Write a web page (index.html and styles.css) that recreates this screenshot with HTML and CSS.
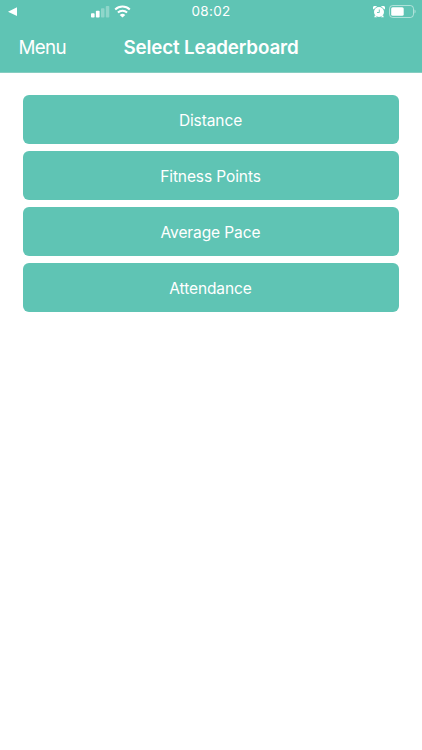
FILE: index.html
```html
<!DOCTYPE html>
<html lang="en">
<head>
<meta charset="utf-8">
<title>Select Leaderboard</title>
<link rel="stylesheet" href="styles.css">
</head>
<body>
<header class="header">
  <div class="status">
    <div class="status-left">
      <svg class="back" width="10" height="10" viewBox="0 0 10 10"><path d="M0 4.700 9 .3v8.800z"/></svg>
      <svg class="signal" width="19" height="12" viewBox="0 0 19 12"><rect x="0" y="7.300" width="3.600" height="4.200" rx=".8"/><rect x="4.900" y="4.800" width="3.700" height="6.700" rx=".8"/><rect class="dim" x="10" y="2.300" width="3.500" height="9.200" rx=".8"/><rect class="dim" x="14.800" y="0" width="3.500" height="11.500" rx=".8"/></svg>
      <svg class="wifi" width="17" height="13" viewBox="0 0 17 13"><path class="wave" d="M1.200 4.500a10.500 10.500 0 0 1 14.600 0M3.900 7.500a6.700 6.700 0 0 1 9.200 0"/><path d="M5.700 9.900a4.200 4.200 0 0 1 5.600 0l-2.800 2.700z"/></svg>
    </div>
    <time class="clock">08:02</time>
    <div class="status-right">
      <svg class="alarm" width="12" height="12" viewBox="0 0 12 12"><circle cx="6" cy="6" r="5"/><path d="M.5 3.500A2.300 2.300 0 0 1 4 .3zM11.500 3.500A2.300 2.300 0 0 0 8 .3zM2 9l-.8 2.200h3zM10 9l.8 2.200h-3z"/><path class="hands" d="M6.300 3.500v3H4"/></svg>
      <svg class="battery" width="27" height="13" viewBox="0 0 27 13"><rect class="shell" x=".5" y=".5" width="24" height="12" rx="3.200"/><rect x="2.200" y="2.200" width="12.500" height="8.600" rx="1.500"/><path class="tip" d="M25.500 4.500c1.500.5 1.500 3.400 0 4z"/></svg>
    </div>
  </div>
  <nav class="nav"><a class="menu">Menu</a><h1 class="title">Select Leaderboard</h1></nav>
</header>
<main class="list">
  <button class="option">Distance</button>
  <button class="option">Fitness Points</button>
  <button class="option">Average Pace</button>
  <button class="option">Attendance</button>
</main>
</body>
</html>
```
FILE: styles.css
```css
* { box-sizing: border-box; }
body { margin: 0; background: #fff; font-family: Inter, sans-serif; color: #fff; }
.header { height: 73px; background: #5fc4b4; border-bottom: 1px solid #85cdc1; }
.status { height: 23px; display: grid; grid-template-columns: 1fr auto 1fr; align-items: center; }
.status-left, .status-right { display: flex; align-items: center; }
.status-left { padding-left: 8px; }
.status-right { justify-content: flex-end; padding-right: 6px; gap: 4px; }
svg { fill: #fff; display: block; }
.signal { margin-left: 73px; }
.wifi { margin-left: 4px; }
.wave { fill: none; stroke: #fff; stroke-width: 2; }
.dim { opacity: .3; }
.hands { fill: none; stroke: #5fc4b4; stroke-width: .9; }
.shell { fill: none; stroke: #fff; opacity: .5; }
.tip { opacity: .5; }
.clock { font-size: 13.500px; letter-spacing: .3px; margin-top: -1px; }
.nav { height: 49px; display: grid; grid-template-columns: 105px 212px 105px; align-items: center; }
.menu { padding: 0 0 1px 18.500px; font-size: 18.800px; letter-spacing: -.7px; }
.title { margin: 0; font-size: 18.800px; font-weight: 600; letter-spacing: -.16px; text-align: center; white-space: nowrap; }
.list { display: flex; flex-direction: column; gap: 6.900px; padding: 22px 23px; }
.option { height: 49.200px; border: 0; border-radius: 6px; background: #5fc4b4; color: #fff; font: 400 15.500px Inter, sans-serif; letter-spacing: -.1px; padding: 1px 1px 0 0; }
```
